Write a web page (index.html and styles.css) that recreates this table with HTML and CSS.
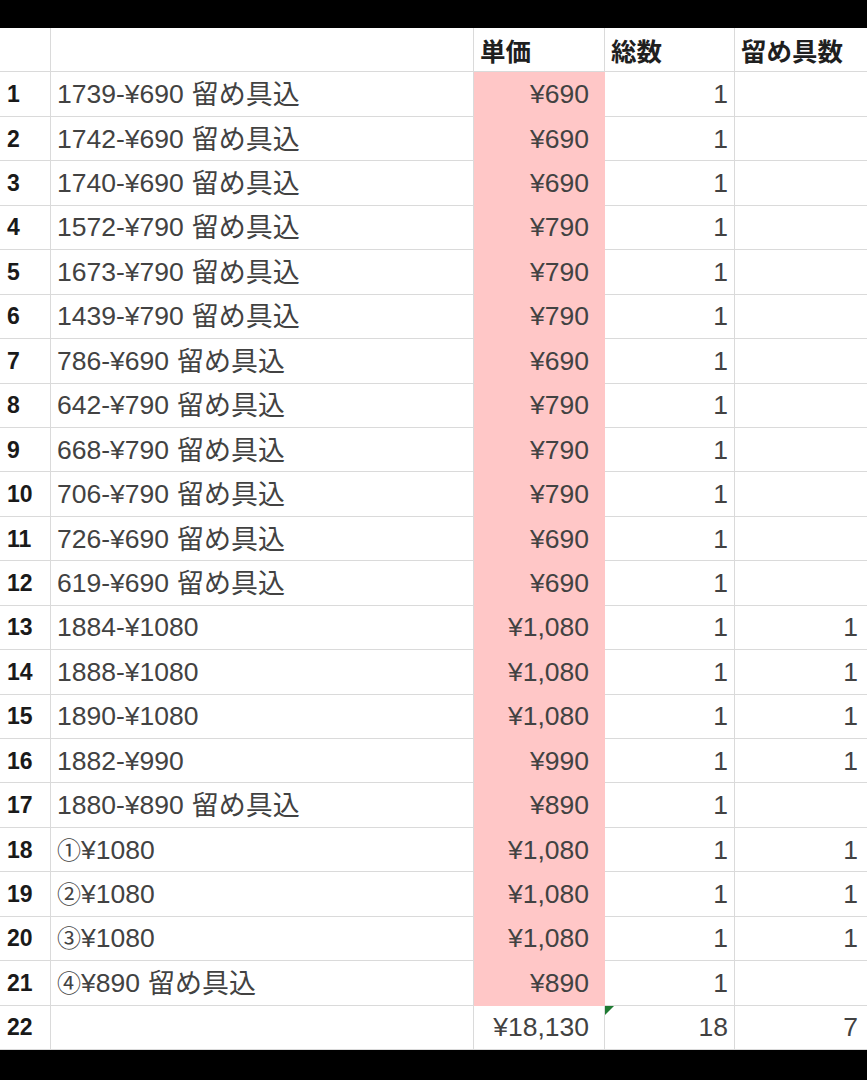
FILE: index.html
```html
<!DOCTYPE html>
<html lang="ja">
<head>
<meta charset="utf-8">
<link rel="stylesheet" href="styles.css">
</head>
<body>
<div class="sheet">
  <div class="c num"></div><div class="c txt"></div><div class="c hd">単価</div><div class="c hd">総数</div><div class="c hd last">留め具数</div>

  <div class="c num">1</div><div class="c txt">1739-¥690<span class="jp">留め具込</span></div><div class="c price">¥690</div><div class="c val">1</div><div class="c val last"></div>
  <div class="c num">2</div><div class="c txt">1742-¥690<span class="jp">留め具込</span></div><div class="c price">¥690</div><div class="c val">1</div><div class="c val last"></div>
  <div class="c num">3</div><div class="c txt">1740-¥690<span class="jp">留め具込</span></div><div class="c price">¥690</div><div class="c val">1</div><div class="c val last"></div>
  <div class="c num">4</div><div class="c txt">1572-¥790<span class="jp">留め具込</span></div><div class="c price">¥790</div><div class="c val">1</div><div class="c val last"></div>
  <div class="c num">5</div><div class="c txt">1673-¥790<span class="jp">留め具込</span></div><div class="c price">¥790</div><div class="c val">1</div><div class="c val last"></div>
  <div class="c num">6</div><div class="c txt">1439-¥790<span class="jp">留め具込</span></div><div class="c price">¥790</div><div class="c val">1</div><div class="c val last"></div>
  <div class="c num">7</div><div class="c txt">786-¥690<span class="jp">留め具込</span></div><div class="c price">¥690</div><div class="c val">1</div><div class="c val last"></div>
  <div class="c num">8</div><div class="c txt">642-¥790<span class="jp">留め具込</span></div><div class="c price">¥790</div><div class="c val">1</div><div class="c val last"></div>
  <div class="c num">9</div><div class="c txt">668-¥790<span class="jp">留め具込</span></div><div class="c price">¥790</div><div class="c val">1</div><div class="c val last"></div>
  <div class="c num">10</div><div class="c txt">706-¥790<span class="jp">留め具込</span></div><div class="c price">¥790</div><div class="c val">1</div><div class="c val last"></div>
  <div class="c num">11</div><div class="c txt">726-¥690<span class="jp">留め具込</span></div><div class="c price">¥690</div><div class="c val">1</div><div class="c val last"></div>
  <div class="c num">12</div><div class="c txt">619-¥690<span class="jp">留め具込</span></div><div class="c price">¥690</div><div class="c val">1</div><div class="c val last"></div>
  <div class="c num">13</div><div class="c txt">1884-¥1080</div><div class="c price">¥1,080</div><div class="c val">1</div><div class="c val last">1</div>
  <div class="c num">14</div><div class="c txt">1888-¥1080</div><div class="c price">¥1,080</div><div class="c val">1</div><div class="c val last">1</div>
  <div class="c num">15</div><div class="c txt">1890-¥1080</div><div class="c price">¥1,080</div><div class="c val">1</div><div class="c val last">1</div>
  <div class="c num">16</div><div class="c txt">1882-¥990</div><div class="c price">¥990</div><div class="c val">1</div><div class="c val last">1</div>
  <div class="c num">17</div><div class="c txt">1880-¥890<span class="jp">留め具込</span></div><div class="c price">¥890</div><div class="c val">1</div><div class="c val last"></div>
  <div class="c num">18</div><div class="c txt"><span class="circ">①</span>¥1080</div><div class="c price">¥1,080</div><div class="c val">1</div><div class="c val last">1</div>
  <div class="c num">19</div><div class="c txt"><span class="circ">②</span>¥1080</div><div class="c price">¥1,080</div><div class="c val">1</div><div class="c val last">1</div>
  <div class="c num">20</div><div class="c txt"><span class="circ">③</span>¥1080</div><div class="c price">¥1,080</div><div class="c val">1</div><div class="c val last">1</div>
  <div class="c num">21</div><div class="c txt"><span class="circ">④</span>¥890<span class="jp">留め具込</span></div><div class="c price">¥890</div><div class="c val">1</div><div class="c val last"></div>

  <div class="c num">22</div><div class="c txt"></div><div class="c total">¥18,130</div><div class="c val flag">18</div><div class="c val last">7</div>
</div>
</body>
</html>
```

FILE: styles.css
```css
html, body {
  margin: 0;
  padding: 0;
  background: #000;
}
body {
  width: 867px;
  height: 1080px;
  overflow: hidden;
  padding-top: 28px;
  box-sizing: border-box;
}
.sheet {
  display: grid;
  grid-template-columns: 51px 423px 131px 130px 132px;
  grid-auto-rows: 44.45px;
  background: #fff;
  font-family: "Liberation Sans", "Noto Sans CJK JP", sans-serif;
  color: #424242;
}
.c {
  display: flex;
  align-items: center;
  box-sizing: border-box;
  border-right: 1px solid #dadada;
  border-bottom: 1px solid #dadada;
  font-size: 26.5px;
  line-height: 30px;
  white-space: nowrap;
  overflow: hidden;
}
.c.last {
  border-right: none;
}
.num {
  font-weight: bold;
  font-size: 23px;
  color: #1a1a1a;
  padding-left: 7px;
}
.txt {
  padding-left: 6px;
}
.jp {
  font-family: "Noto Sans CJK JP", sans-serif;
  font-size: 27px;
  line-height: 30px;
  margin-left: 8px;
  position: relative;
  top: -1px;
}
.circ {
  font-family: "Noto Sans CJK JP", sans-serif;
  font-size: 24px;
  line-height: 30px;
  position: relative;
  top: -1px;
}
.hd {
  font-family: "Noto Sans CJK JP", sans-serif;
  font-weight: bold;
  font-size: 25.5px;
  color: #1f1f1f;
  padding-left: 6px;
}
.price {
  background: #ffc7c7;
  border-right-color: #ffc7c7;
  border-bottom-color: #ffc7c7;
  justify-content: flex-end;
  padding-right: 15px;
}
.total {
  justify-content: flex-end;
  padding-right: 15px;
}
.val {
  justify-content: flex-end;
  padding-right: 6px;
}
.val.last {
  padding-right: 9px;
}
.flag {
  position: relative;
}
.flag::before {
  content: "";
  position: absolute;
  left: 0;
  top: 0;
  width: 0;
  height: 0;
  border-top: 9px solid #1e7a32;
  border-right: 9px solid transparent;
}
```
